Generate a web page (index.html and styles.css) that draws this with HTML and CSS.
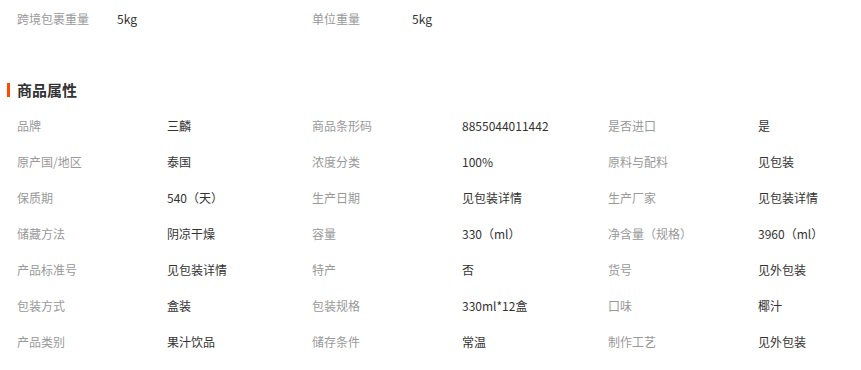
FILE: index.html
```html
<!DOCTYPE html>
<html lang="zh-CN">
<head>
<meta charset="utf-8">
<link rel="stylesheet" href="styles.css">
</head>
<body>
<div class="top-row">
  <span class="lbl w100">跨境包裹重量</span><span class="val w195">5kg</span>
  <span class="lbl w100">单位重量</span><span class="val">5kg</span>
</div>
<h2 class="heading">商品属性</h2>
<div class="attrs">
  <span class="lbl">品牌</span><span class="val">三麟</span>
  <span class="lbl">商品条形码</span><span class="val">8855044011442</span>
  <span class="lbl">是否进口</span><span class="val">是</span>

  <span class="lbl">原产国/地区</span><span class="val">泰国</span>
  <span class="lbl">浓度分类</span><span class="val">100%</span>
  <span class="lbl">原料与配料</span><span class="val">见包装</span>

  <span class="lbl">保质期</span><span class="val">540（天）</span>
  <span class="lbl">生产日期</span><span class="val">见包装详情</span>
  <span class="lbl">生产厂家</span><span class="val">见包装详情</span>

  <span class="lbl">储藏方法</span><span class="val">阴凉干燥</span>
  <span class="lbl">容量</span><span class="val">330（ml）</span>
  <span class="lbl">净含量（规格）</span><span class="val">3960（ml）</span>

  <span class="lbl">产品标准号</span><span class="val">见包装详情</span>
  <span class="lbl">特产</span><span class="val">否</span>
  <span class="lbl">货号</span><span class="val">见外包装</span>

  <span class="lbl">包装方式</span><span class="val">盒装</span>
  <span class="lbl">包装规格</span><span class="val">330ml*12盒</span>
  <span class="lbl">口味</span><span class="val">椰汁</span>

  <span class="lbl">产品类别</span><span class="val">果汁饮品</span>
  <span class="lbl">储存条件</span><span class="val">常温</span>
  <span class="lbl">制作工艺</span><span class="val">见外包装</span>
</div>
</body>
</html>
```
FILE: styles.css
```css
html, body {
  margin: 0;
  padding: 0;
  background: #fff;
}
body {
  font-family: "Microsoft YaHei", "Noto Sans CJK SC", "Noto Sans", sans-serif;
  font-size: 12px;
  color: #333;
  width: 861px;
  height: 370px;
  overflow: hidden;
}
.top-row {
  display: flex;
  margin-top: 1px;
  padding-left: 17px;
  height: 36px;
  line-height: 36px;
}
.w100 { width: 100px; }
.w195 { width: 195px; }
.lbl { color: #999; }
.val { color: #333; }
.heading {
  margin: 46px 0 0 7px;
  padding-left: 7px;
  border-left: 3px solid #ff4a00;
  font-size: 15px;
  font-weight: bold;
  color: #333;
  line-height: 14px;
  height: 14px;
}
.attrs {
  margin-top: 11px;
  padding-left: 17px;
  display: grid;
  grid-template-columns: 150px 145px 150px 146px 150px 120px;
  grid-auto-rows: 36px;
  line-height: 36px;
}
.attrs span {
  white-space: nowrap;
}
```
